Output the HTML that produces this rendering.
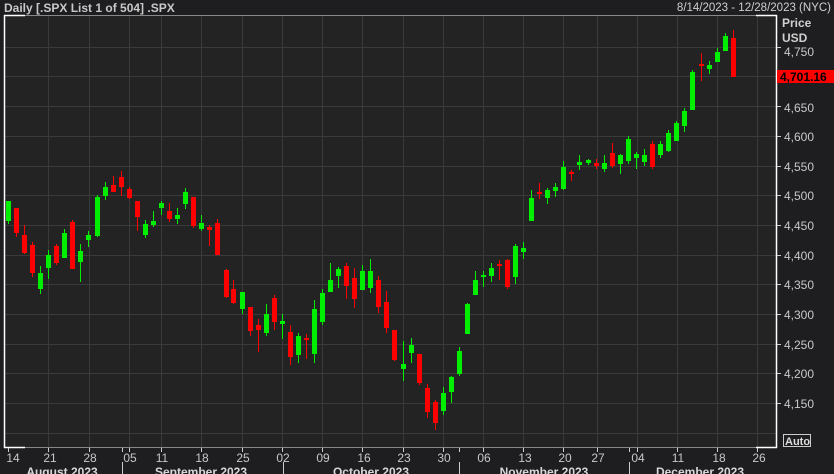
<!DOCTYPE html>
<html><head><meta charset="utf-8"><style>
html,body{margin:0;padding:0;background:#1e1e20;width:834px;height:474px;overflow:hidden;font-family:"Liberation Sans",sans-serif}
svg{position:absolute;left:0;top:0}
</style></head><body>
<svg width="834" height="474" xmlns="http://www.w3.org/2000/svg" font-family="Liberation Sans, sans-serif">
<rect x="0" y="0" width="834" height="474" fill="#1e1e20"/>
<rect x="4" y="15" width="772" height="432" fill="#232323"/>
<g stroke="#3a3a3a" stroke-width="1">
<line x1="4" x2="776" y1="47.5" y2="47.5"/><line x1="4" x2="776" y1="76.5" y2="76.5"/><line x1="4" x2="776" y1="106.5" y2="106.5"/><line x1="4" x2="776" y1="136.5" y2="136.5"/><line x1="4" x2="776" y1="166.5" y2="166.5"/><line x1="4" x2="776" y1="195.5" y2="195.5"/><line x1="4" x2="776" y1="225.5" y2="225.5"/><line x1="4" x2="776" y1="255.5" y2="255.5"/><line x1="4" x2="776" y1="284.5" y2="284.5"/><line x1="4" x2="776" y1="314.5" y2="314.5"/><line x1="4" x2="776" y1="344.5" y2="344.5"/><line x1="4" x2="776" y1="373.5" y2="373.5"/><line x1="4" x2="776" y1="403.5" y2="403.5"/><line x1="4" x2="776" y1="433.5" y2="433.5"/>
<line y1="15" y2="447" x1="48.5" x2="48.5"/><line y1="15" y2="447" x1="89.5" x2="89.5"/><line y1="15" y2="447" x1="129.5" x2="129.5"/><line y1="15" y2="447" x1="161.5" x2="161.5"/><line y1="15" y2="447" x1="201.5" x2="201.5"/><line y1="15" y2="447" x1="242.5" x2="242.5"/><line y1="15" y2="447" x1="282.5" x2="282.5"/><line y1="15" y2="447" x1="322.5" x2="322.5"/><line y1="15" y2="447" x1="362.5" x2="362.5"/><line y1="15" y2="447" x1="403.5" x2="403.5"/><line y1="15" y2="447" x1="443.5" x2="443.5"/><line y1="15" y2="447" x1="483.5" x2="483.5"/><line y1="15" y2="447" x1="523.5" x2="523.5"/><line y1="15" y2="447" x1="563.5" x2="563.5"/><line y1="15" y2="447" x1="597.5" x2="597.5"/><line y1="15" y2="447" x1="637.5" x2="637.5"/><line y1="15" y2="447" x1="677.5" x2="677.5"/><line y1="15" y2="447" x1="717.5" x2="717.5"/><line y1="15" y2="447" x1="757.5" x2="757.5"/>
</g>
<g stroke="#888" stroke-width="1"><line x1="4" x2="776" y1="15.5" y2="15.5"/><line x1="4" x2="776" y1="447.5" y2="447.5"/></g>
<g stroke="#fff" stroke-width="1.5"><line x1="4.5" x2="4.5" y1="15" y2="448"/><line x1="4" x2="25" y1="15.5" y2="15.5"/><line x1="4" x2="25" y1="447.5" y2="447.5"/><line x1="776.5" x2="776.5" y1="15" y2="448"/><line x1="756" x2="777" y1="15.5" y2="15.5"/><line x1="756" x2="777" y1="447.5" y2="447.5"/></g>
<g id="c">
<g fill="#00ee00" stroke="#00ee00">
<path d="M8.5 201V224M16.5 0M40.5 266V294M48.5 250V279M64.5 229V258M80.5 244V282M88.5 231V247M97.5 195V237M105.5 182V200M145.5 220V238M153.5 211V227M161.5 201V215M177.5 208V224M185.5 188V209M201.5 215V231M242.5 292V314M266.5 304V336M282.5 314V339M298.5 333V363M314.5 300V363M322.5 289V325M330.5 263V292M338.5 267V288M362.5 265V290M370.5 259V293M403.5 341V381M411.5 338V363M443.5 387V415M451.5 376V403M459.5 347V376M467.5 303V334M475.5 271V295M483.5 271V287M491.5 263V282M515.5 244V284M523.5 242V259M531.5 190V221M547.5 188V204M555.5 183V197M563.5 161V190M579.5 155V170M588.5 159V165M604.5 155V172M620.5 154V174M628.5 136V164M636.5 152V169M644.5 149V166M660.5 141V158M668.5 130V152M676.5 121V141M684.5 108V132M692.5 70V110M709.5 61V74M717.5 48V62M725.5 33V51"/>
</g>
<g fill="#00ee00">
<rect x="6" y="201" width="5" height="20"/><rect x="38" y="273" width="5" height="16"/><rect x="46" y="255" width="5" height="13"/><rect x="62" y="233" width="5" height="25"/><rect x="78" y="251" width="5" height="11"/><rect x="86" y="235" width="5" height="5"/><rect x="95" y="197" width="5" height="39"/><rect x="103" y="187" width="5" height="9"/><rect x="143" y="224" width="5" height="11"/><rect x="151" y="221" width="5" height="4"/><rect x="159" y="203" width="5" height="5"/><rect x="175" y="215" width="5" height="4"/><rect x="183" y="192" width="5" height="12"/><rect x="199" y="223" width="5" height="6"/><rect x="240" y="292" width="5" height="17"/><rect x="264" y="314" width="5" height="19"/><rect x="280" y="321" width="5" height="3"/><rect x="296" y="336" width="5" height="19"/><rect x="312" y="309" width="5" height="45"/><rect x="320" y="293" width="5" height="29"/><rect x="328" y="280" width="5" height="12"/><rect x="336" y="269" width="5" height="7"/><rect x="360" y="271" width="5" height="19"/><rect x="368" y="271" width="5" height="17"/><rect x="401" y="364" width="5" height="5"/><rect x="409" y="345" width="5" height="8"/><rect x="441" y="393" width="5" height="18"/><rect x="449" y="377" width="5" height="15"/><rect x="457" y="351" width="5" height="23"/><rect x="465" y="304" width="5" height="30"/><rect x="473" y="280" width="5" height="15"/><rect x="481" y="275" width="5" height="2"/><rect x="489" y="268" width="5" height="8"/><rect x="513" y="246" width="5" height="31"/><rect x="521" y="248" width="5" height="4"/><rect x="529" y="198" width="5" height="23"/><rect x="545" y="190" width="5" height="8"/><rect x="553" y="187" width="5" height="4"/><rect x="561" y="167" width="5" height="22"/><rect x="577" y="162" width="5" height="3"/><rect x="586" y="160" width="5" height="3"/><rect x="602" y="163" width="5" height="6"/><rect x="618" y="155" width="5" height="9"/><rect x="626" y="139" width="5" height="22"/><rect x="634" y="154" width="5" height="4"/><rect x="642" y="155" width="5" height="7"/><rect x="658" y="144" width="5" height="11"/><rect x="666" y="133" width="5" height="18"/><rect x="674" y="123" width="5" height="18"/><rect x="682" y="111" width="5" height="15"/><rect x="690" y="72" width="5" height="38"/><rect x="707" y="65" width="5" height="4"/><rect x="715" y="52" width="5" height="10"/><rect x="723" y="36" width="5" height="15"/>
</g>
<g stroke="#ff0000" fill="none">
<path d="M16.5 208V237M24.5 225V254M32.5 242V277M56.5 244V265M72.5 220V269M113.5 176V192M121.5 171V196M129.5 187V199M137.5 201V231M169.5 203V222M193.5 197V228M209.5 225V246M217.5 219V255M226.5 269V298M233.5 280V304M250.5 307V336M258.5 319V352M274.5 295V330M290.5 325V365M306.5 334V359M346.5 263V299M354.5 268V308M378.5 276V313M386.5 291V333M394.5 330V361M419.5 354V385M427.5 384V418M435.5 400V430M499.5 260V280M507.5 259V289M539.5 183V199M571.5 170V181M596.5 159V169M612.5 143V168M652.5 141V169M701.5 53V81M733.5 30V77"/>
</g>
<g fill="#ff0000">
<rect x="14" y="208" width="5" height="25"/><rect x="22" y="235" width="5" height="18"/><rect x="30" y="245" width="5" height="28"/><rect x="54" y="246" width="5" height="17"/><rect x="70" y="222" width="5" height="47"/><rect x="111" y="185" width="5" height="7"/><rect x="119" y="177" width="5" height="10"/><rect x="127" y="189" width="5" height="9"/><rect x="135" y="201" width="5" height="16"/><rect x="167" y="211" width="5" height="8"/><rect x="191" y="197" width="5" height="29"/><rect x="207" y="227" width="5" height="3"/><rect x="215" y="223" width="5" height="32"/><rect x="224" y="270" width="5" height="27"/><rect x="231" y="289" width="5" height="14"/><rect x="248" y="307" width="5" height="24"/><rect x="256" y="325" width="5" height="5"/><rect x="272" y="298" width="5" height="24"/><rect x="288" y="332" width="5" height="25"/><rect x="304" y="338" width="5" height="2"/><rect x="344" y="266" width="5" height="20"/><rect x="352" y="278" width="5" height="21"/><rect x="376" y="280" width="5" height="27"/><rect x="384" y="302" width="5" height="26"/><rect x="392" y="330" width="5" height="30"/><rect x="417" y="354" width="5" height="29"/><rect x="425" y="388" width="5" height="24"/><rect x="433" y="402" width="5" height="21"/><rect x="497" y="264" width="5" height="2"/><rect x="505" y="260" width="5" height="27"/><rect x="537" y="192" width="5" height="2"/><rect x="569" y="172" width="5" height="2"/><rect x="594" y="163" width="5" height="3"/><rect x="610" y="153" width="5" height="13"/><rect x="650" y="144" width="5" height="23"/><rect x="699" y="64" width="5" height="2"/><rect x="731" y="38" width="5" height="39"/>
</g>
</g>
<g fill="#cfcfcf" font-size="12">
<text x="4" y="12" font-weight="bold" fill="#c8c8c8">Daily [.SPX List 1 of 504] .SPX</text>
<text x="831" y="11" text-anchor="end" font-size="11.5">8/14/2023 - 12/28/2023 (NYC)</text>
<text x="782" y="27" font-weight="bold">Price</text>
<text x="782" y="42" font-weight="bold">USD</text>
</g>
<g fill="#c8c8c8" font-size="12">
<text x="784" y="56">4,750</text><text x="784" y="112">4,650</text><text x="784" y="141">4,600</text><text x="784" y="171">4,550</text><text x="784" y="200">4,500</text><text x="784" y="230">4,450</text><text x="784" y="260">4,400</text><text x="784" y="289">4,350</text><text x="784" y="319">4,300</text><text x="784" y="349">4,250</text><text x="784" y="378">4,200</text><text x="784" y="408">4,150</text>
</g>
<g stroke="#ccc"><path d="M777 47.5H781M777 106.5H781M777 136.5H781M777 166.5H781M777 195.5H781M777 225.5H781M777 255.5H781M777 284.5H781M777 314.5H781M777 344.5H781M777 373.5H781M777 403.5H781"/></g>
<rect x="777" y="70" width="57" height="13" fill="#ff0000"/>
<text x="780" y="81" font-size="12" font-weight="bold" fill="#000">4,701.16</text>
<rect x="783.5" y="434.5" width="27" height="12" fill="none" stroke="#ccc"/>
<text x="785" y="445" font-size="11" font-weight="bold" fill="#ddd">Auto</text>
<g stroke="#ccc"><path d="M8.5 448V452M48.5 448V452M89.5 448V452M122.5 448V452M129.5 448V452M161.5 448V452M201.5 448V452M242.5 448V452M282.5 448V452M322.5 448V452M362.5 448V452M403.5 448V452M443.5 448V452M459.5 448V452M483.5 448V452M523.5 448V452M563.5 448V452M597.5 448V452M629.5 448V452M637.5 448V452M677.5 448V452M717.5 448V452M757.5 448V452M122.5 462V474M283.5 462V474M459.5 462V474M629.5 462V474"/></g>
<g fill="#c8c8c8" font-size="12" text-anchor="middle">
<text x="13" y="462">14</text><text x="50" y="462">21</text><text x="90" y="462">28</text><text x="130" y="462">05</text><text x="162" y="462">11</text><text x="202" y="462">18</text><text x="243" y="462">25</text><text x="283" y="462">02</text><text x="323" y="462">09</text><text x="364" y="462">16</text><text x="404" y="462">23</text><text x="444" y="462">30</text><text x="484" y="462">06</text><text x="525" y="462">13</text><text x="565" y="462">20</text><text x="598" y="462">27</text><text x="638" y="462">04</text><text x="678" y="462">11</text><text x="719" y="462">18</text><text x="759" y="462">26</text>
</g>
<g fill="#d8d8d8" font-size="12" font-weight="bold" text-anchor="middle">
<text x="62" y="476">August 2023</text><text x="201" y="476">September 2023</text><text x="371" y="476">October 2023</text><text x="544" y="476">November 2023</text><text x="700" y="476">December 2023</text>
</g>
</svg>
</body></html>
